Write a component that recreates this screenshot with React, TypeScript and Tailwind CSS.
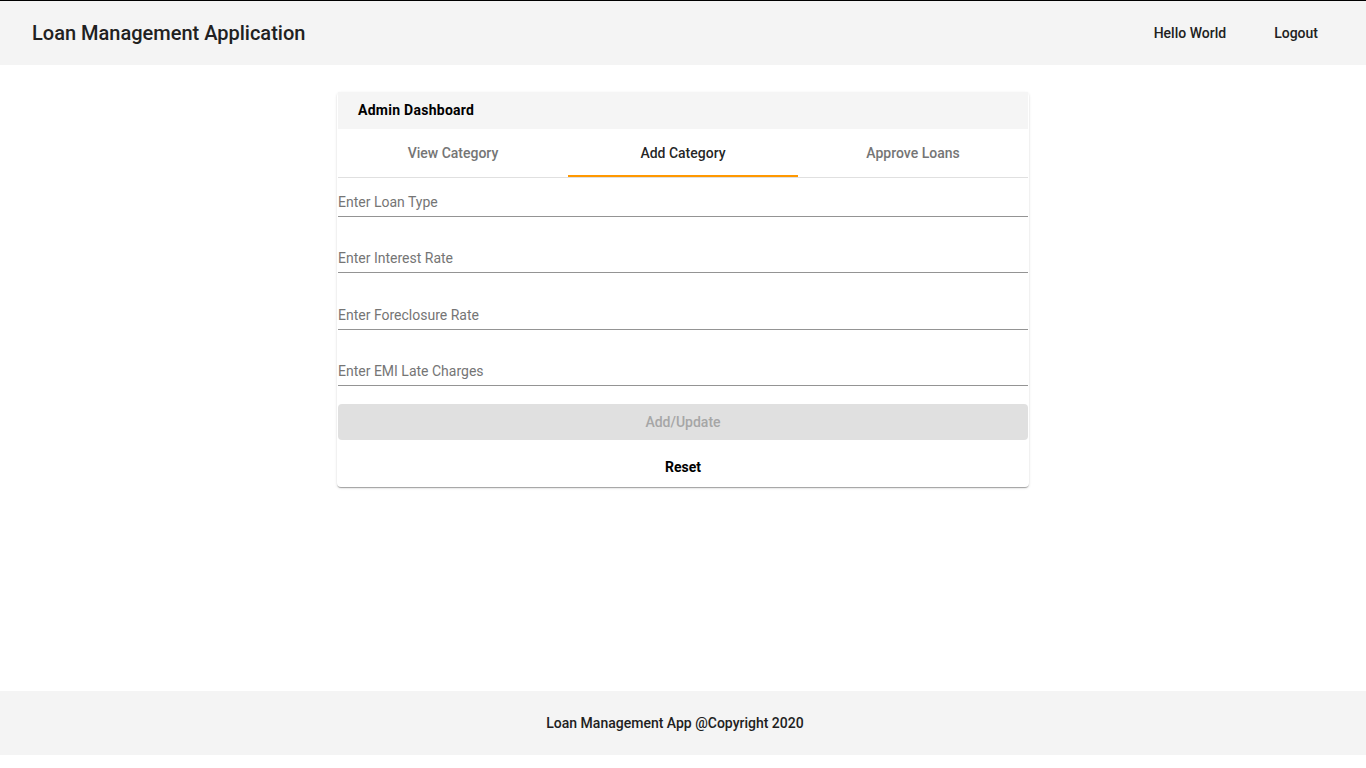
import React from "react";

export default function App() {
  const fields = [
    { label: "Enter Loan Type", mt: "mt-0" },
    { label: "Enter Interest Rate", mt: "mt-[17px]" },
    { label: "Enter Foreclosure Rate", mt: "mt-[18px]" },
    { label: "Enter EMI Late Charges", mt: "mt-[17px]" },
  ];
  return (
    <div className="w-[1366px] h-[768px] bg-white font-['Roboto',_'Liberation_Sans',_sans-serif] text-[#212121]">
      <header className="h-[65px] border-t border-black bg-[#f4f4f4] flex items-center justify-between pl-[32px] pr-[48px]">
        <div className="text-[20px] font-medium">Loan Management Application</div>
        <nav className="flex items-center gap-[48px] text-[14px] font-medium">
          <span>Hello World</span>
          <span>Logout</span>
        </nav>
      </header>
      <main className="h-[626px] flex justify-center pt-[27px]">
        <div className="w-[692px] h-fit bg-white rounded-[4px] shadow-[0px_2px_1px_-1px_rgba(0,0,0,0.2),0px_1px_1px_0px_rgba(0,0,0,0.14),0px_1px_3px_0px_rgba(0,0,0,0.12)] px-px pb-[2px]">
          <div className="h-[37px] bg-[#f5f5f5] flex items-center pl-[20px] text-[14px] font-bold tracking-[0.27px] text-black">
            Admin Dashboard
          </div>
          <div className="flex h-[49px] border-b border-[#e0e0e0]">
            {["View Category", "Add Category", "Approve Loans"].map((t, i) => (
              <div
                key={t}
                className={
                  i === 1
                    ? "flex-1 flex items-center justify-center text-[14px] font-medium text-[#000000de] border-b-2 border-[#ff9800] pt-[2px]"
                    : "flex-1 flex items-center justify-center text-[14px] font-medium text-[#757575]"
                }
              >
                {t}
              </div>
            ))}
          </div>
          {fields.map((f) => (
            <div
              key={f.label}
              className={`${f.mt} h-[39px] border-b border-[#949494] flex items-end pb-[4px]`}
            >
              <span className="text-[14px] leading-[20px] text-[#757575]">{f.label}</span>
            </div>
          ))}
          <div className="mt-[18px] h-[36px] rounded-[4px] bg-[#e0e0e0] flex items-center justify-center text-[14px] font-medium text-[#a6a6a6]">
            Add/Update
          </div>
          <div className="mt-[9px] h-[36px] flex items-center justify-center text-[14px] font-bold text-black">
            Reset
          </div>
        </div>
      </main>
      <footer className="h-[64px] bg-[#f4f4f4] flex items-center justify-center pr-[16px] text-[14px] font-medium">
        Loan Management App @Copyright 2020
      </footer>
    </div>
  );
}
